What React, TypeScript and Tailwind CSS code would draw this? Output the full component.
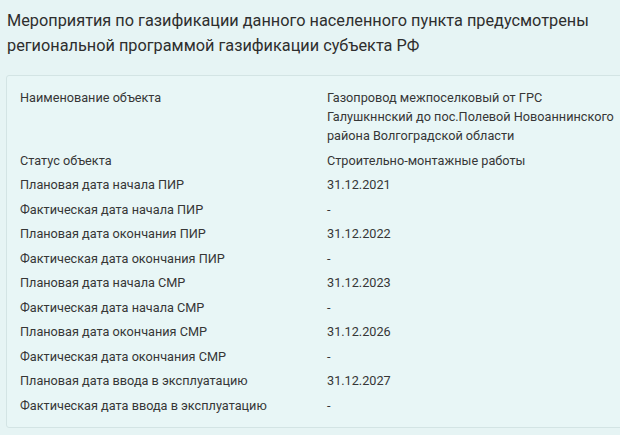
const rows: [string, string[]][] = [
  [
    "Наименование объекта",
    [
      "Газопровод межпоселковый от ГРС",
      "Галушкннский до пос.Полевой Новоаннинского",
      "района Волгоградской области",
    ],
  ],
  ["Статус объекта", ["Строительно-монтажные работы"]],
  ["Плановая дата начала ПИР", ["31.12.2021"]],
  ["Фактическая дата начала ПИР", ["-"]],
  ["Плановая дата окончания ПИР", ["31.12.2022"]],
  ["Фактическая дата окончания ПИР", ["-"]],
  ["Плановая дата начала СМР", ["31.12.2023"]],
  ["Фактическая дата начала СМР", ["-"]],
  ["Плановая дата окончания СМР", ["31.12.2026"]],
  ["Фактическая дата окончания СМР", ["-"]],
  ["Плановая дата ввода в эксплуатацию", ["31.12.2027"]],
  ["Фактическая дата ввода в эксплуатацию", ["-"]],
];

export default function App() {
  return (
    <div
      className="w-[620px] h-[435px] overflow-hidden bg-[#e6f4f4] text-[#333]"
      style={{ fontFamily: "Roboto, 'Noto Sans', sans-serif" }}
    >
      <h2 className="pl-[7px] pt-[8px] text-[16.3px] leading-[25px] font-normal text-[#2e2e2e]">
        Мероприятия по газификации данного населенного пункта предусмотрены
        <br />
        региональной программой газификации субъекта РФ
      </h2>
      <div className="ml-[6px] mt-[17px] w-[640px] border border-[#d3e4e4] rounded-[3px] bg-[#e8f6f6] pl-[13px] pt-[12px] pb-[12px]">
        <div className="flex flex-col gap-[5.5px] text-[12.7px] leading-[19px] text-[#363636]">
          {rows.map(([label, value]) => (
            <div key={label} className="flex">
              <div className="w-[307px] shrink-0">{label}</div>
              <div className="flex flex-col whitespace-nowrap">
                {value.map((line) => (
                  <div key={line}>{line}</div>
                ))}
              </div>
            </div>
          ))}
        </div>
      </div>
    </div>
  );
}
